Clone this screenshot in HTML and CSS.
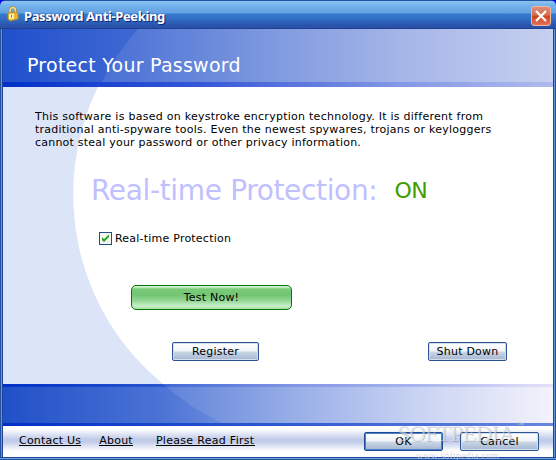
FILE: index.html
```html
<!DOCTYPE html>
<html lang="en">
<head>
    <meta charset="UTF-8">
    <title>Password Anti-Peeking</title>
    <link rel="stylesheet" href="styles.css">
</head>
<body>
    <div class="window">
        <div class="titlebar">
            <svg class="lock" width="12" height="16" viewBox="0 0 12 16">
                <path d="M3 8V4.500Q3.500 1.500 6 1.500Q8.500 1.500 8.500 5V7" fill="none" stroke="#a8842a" stroke-width="2.600"/>
                <path d="M3 8V4.500Q3.500 1.500 6 1.500Q8.500 1.500 8.500 5V7" fill="none" stroke="#f8e28a" stroke-width="1.400"/>
                <path d="M1 7L9 6L11 8V13L3 15L1 13Z" fill="#e9b630" stroke="#b8892a" stroke-width=".8"/>
                <path d="M2 8L7 7.500V13L2 13Z" fill="#fff0ad"/>
                <path d="M4.500 9V11.500" stroke="#94701b"/>
            </svg>
            <span class="title">Password Anti-Peeking</span>
            <button class="close">
                <svg width="20" height="20" viewBox="0 0 20 20">
                    <path d="M5 5L15 15M15 5L5 15" stroke="#fff" stroke-width="2.200"/>
                </svg>
            </button>
        </div>
        <div class="client">
            <svg class="swoosh" width="550" height="397" viewBox="3 29 550 397">
                <path class="glow" d="M138 29H553V82H102A245 245 0 0 1 138 29Z"/>
                <path class="paper" d="M98 87A245 245 0 0 0 163 384H553V87Z"/>
                <path class="glow" d="M163 384H553V423H222A245 245 0 0 1 163 384Z"/>
            </svg>
            <div class="header"><h1>Protect Your Password</h1></div>
            <div class="content">
                <p class="intro">
                    <span class="line1">This software is based on keystroke encryption technology. It is different from</span><br>
                    <span class="line2">traditional anti-spyware tools. Even the newest spywares, trojans or keyloggers</span><br>
                    <span class="line3">cannot steal your password or other privacy information.</span>
                </p>
                <div class="status"><span class="status-label">Real-time Protection:</span><span class="status-value">ON</span></div>
                <div class="option">
                    <svg width="13" height="13" viewBox="0 0 13 13">
                        <rect x=".5" y=".5" width="12" height="12" fill="#f4f4f1" stroke="#1c5180"/>
                        <path d="M3 5V8L5 10L10 5V2.500L5 7.200Z" fill="#21a121"/>
                    </svg>
                    <span>Real-time Protection</span>
                </div>
                <button class="test">Test Now!</button>
                <div class="actions">
                    <button class="btn register">Register</button>
                    <button class="btn shutdown">Shut Down</button>
                </div>
            </div>
            <div class="band"></div>
            <div class="bottom">
                <a class="contact">Contact Us</a>
                <a class="about">About</a>
                <a class="readme">Please Read First</a>
                <button class="btn ok">OK</button>
                <button class="btn cancel">Cancel</button>
            </div>
        </div>
        <svg class="watermark" width="140" height="40" viewBox="0 0 140 40">
            <text class="mark-shade" x="8" y="21" textLength="118">SOFTPEDIA</text>
            <text class="mark" x="7" y="20" textLength="118">SOFTPEDIA</text>
            <text class="mark-tm" x="127" y="6">™</text>
            <text class="mark-url" x="26" y="38" textLength="83">www.softpedia.com</text>
        </svg>
    </div>
</body>
</html>
```

FILE: styles.css
```css
body {
    margin: 0;
    background: #0000f8;
    font-family: "DejaVu Sans", Verdana, sans-serif;
    font-size: 11px;
    letter-spacing: .22px;
    color: #000;
    overflow: hidden;
}
button {
    font: inherit;
    color: inherit;
    letter-spacing: inherit;
    padding: 0;
    box-sizing: border-box;
}
.window {
    position: relative;
    width: 556px;
    height: 460px;
    box-sizing: border-box;
    padding: 0 3px 3px;
    border-radius: 6px 6px 0 0;
    background:
        linear-gradient(#1f459b 1px, #6ea3e2 1px, #6ea3e2 2px, #2350a0 2px) 0 100% / 100% 3px no-repeat,
        linear-gradient(90deg, #2350a0 1px, #79aee9 1px, #4c82cc 2px, #1f459b 2px, #1f459b 554px, #4c82cc 554px, #79aee9 555px, #2350a0 555px);
    overflow: hidden;
    white-space: nowrap;
}
.titlebar {
    display: flex;
    align-items: center;
    height: 29px;
    margin: 0 -3px;
    padding: 1px 5px 0 7px;
    box-sizing: border-box;
    border-bottom: 1px solid #203f91;
    background: linear-gradient(#2451a0 1px, #8ac4f0 1px, #75b4ec 5px, #62a0e4 13px, #3679cc 14px, #3272c6 18px, #2a55ad 25px, #2a50a7 28px);
}
.title {
    margin-left: 5px;
    padding-top: 3px;
    font-family: "Noto Sans", sans-serif;
    font-size: 13px;
    font-weight: bold;
    line-height: 18px;
    letter-spacing: -.37px;
    color: #fff;
    text-shadow: 1px 1px #102478;
}
.lock {
    margin-top: -1px;
}
.close {
    width: 20px;
    height: 20px;
    margin-left: auto;
    margin-top: 2px;
    border: 1px solid #f2b7a2;
    border-radius: 3px;
    background: linear-gradient(#dc8f7c, #d66c4b 46%, #cf4418 50%, #e0725a);
}
.close svg {
    display: block;
    margin: -1px;
}
.client {
    position: relative;
    height: 428px;
    background: #fff;
}
.swoosh {
    position: absolute;
    left: 0;
    top: 0;
}
.glow {
    fill: #fff;
    fill-opacity: .1;
}
.paper {
    fill: #fff;
}
.header {
    height: 53px;
    border-bottom: 5px solid #0030c8;
    border-image: linear-gradient(90deg, #0030c8, #3558d8 36%, #8498e5 72%, #b0bbee) 5;
    background: linear-gradient(90deg, #2050cc, #3f68d2 24%, #7290dc 50%, #9aade6 72%, #c0cbee);
}
h1 {
    position: relative;
    margin: 0;
    padding: 24px 0 0 24px;
    font-size: 19px;
    font-weight: normal;
    line-height: 24px;
    letter-spacing: .25px;
    color: #fff;
}
.content {
    height: 297px;
    box-sizing: border-box;
    padding-top: 23px;
    background: #dce4f7;
}
.intro, .status, .option, .test, .actions {
    position: relative;
}
.intro {
    margin: 0 0 0 32px;
    line-height: 13px;
}
.line1 {
    letter-spacing: .26px;
}
.line2 {
    letter-spacing: .23px;
}
.status {
    display: flex;
    align-items: center;
    height: 34px;
    margin: 24px 0 0 88px;
    font-size: 28px;
    letter-spacing: -.35px;
    color: #c0c0ff;
}
.status-value {
    margin-left: 17px;
    font-size: 22px;
    color: #409c00;
}
.option {
    display: flex;
    align-items: center;
    height: 14px;
    gap: 3px;
    margin: 24px 0 0 96px;
}
.test {
    display: block;
    width: 161px;
    height: 25px;
    margin: 40px 0 0 128px;
    border: 1px solid #077907;
    border-radius: 5px;
    background: linear-gradient(#d0f0d0 1px, #7acb7a 3px, #72c572 9px, #96d796 15px, #c8efc8 20px, #a6dca6 23px);
}
.actions {
    display: flex;
    margin: 32px 0 0 169px;
}
.btn {
    height: 19px;
    border: 1px solid #2b5491;
    border-radius: 2px;
    box-shadow: inset 0 0 0 1px #d3dfef;
    background: linear-gradient(#fff, #f1f5f9 45%, #c8d5e5 55%, #a5b6d1);
    line-height: 17px;
}
.register {
    width: 87px;
}
.shutdown {
    width: 79px;
    margin-left: 169px;
}
.band {
    height: 42px;
    background:
        linear-gradient(90deg, #0030c8, #2855cf 28%, #7289e2 52%, #a0aeee 76%, #e2def8) 0 0 / 100% 3px no-repeat,
        linear-gradient(90deg, #0030c8, #2855cf 45%, #6987df) 0 100% / 100% 3px no-repeat,
        linear-gradient(90deg, #2050c8, #4a72d5 28%, #8aa4e4 52%, #c5d0f2 76%, #f3f1fd);
}
.bottom {
    display: flex;
    align-items: flex-start;
    height: 31px;
    padding-left: 16px;
    background: linear-gradient(#fff 3px, #c2cce9 13px, #c2cce9 16px, #fff 25px);
}
.bottom a {
    margin-top: 9px;
    line-height: 12px;
    border-bottom: 1px solid #000;
    height: 10px;
}
.bottom .about {
    margin-left: 18px;
}
.bottom .readme {
    margin-left: 23px;
    letter-spacing: .3px;
}
.ok {
    width: 79px;
    margin: 6px 0 0 auto;
    border-color: #1d4b9c;
    box-shadow: inset 0 0 0 1px #4e7fc9;
}
.cancel {
    width: 79px;
    margin: 6px 14px 0 17px;
}
.watermark {
    position: absolute;
    left: 390px;
    top: 421px;
}
.watermark text {
    font-family: "Liberation Serif", serif;
    font-size: 23px;
}
.watermark .mark-shade {
    fill: #555;
    fill-opacity: .25;
}
.watermark .mark {
    fill: #e2e5ec;
    fill-opacity: .55;
}
.watermark .mark-tm {
    font-size: 7px;
    fill: #ccc;
}
.watermark .mark-url {
    font-size: 10px;
    fill: #ccd;
    fill-opacity: .8;
}
```
